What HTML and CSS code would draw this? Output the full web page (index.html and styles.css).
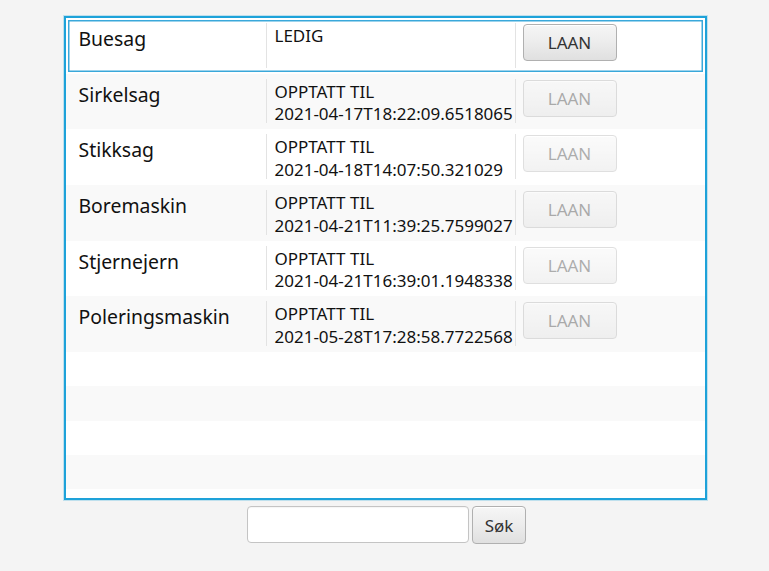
FILE: index.html
```html
<!DOCTYPE html>
<html>
<head>
<meta charset="utf-8">
<link rel="stylesheet" href="styles.css">
</head>
<body>
<div class="page">
  <div class="frame">
    <div class="row selected">
      <div class="cell name">Buesag</div>
      <div class="cell status">LEDIG</div>
      <div class="cell action"><button class="btn">LAAN</button></div>
    </div>
    <div class="row odd">
      <div class="cell name">Sirkelsag</div>
      <div class="cell status">OPPTATT TIL<br>2021-04-17T18:22:09.6518065</div>
      <div class="cell action"><button class="btn" disabled>LAAN</button></div>
    </div>
    <div class="row">
      <div class="cell name">Stikksag</div>
      <div class="cell status">OPPTATT TIL<br>2021-04-18T14:07:50.321029</div>
      <div class="cell action"><button class="btn" disabled>LAAN</button></div>
    </div>
    <div class="row odd">
      <div class="cell name">Boremaskin</div>
      <div class="cell status">OPPTATT TIL<br>2021-04-21T11:39:25.7599027</div>
      <div class="cell action"><button class="btn" disabled>LAAN</button></div>
    </div>
    <div class="row">
      <div class="cell name">Stjernejern</div>
      <div class="cell status">OPPTATT TIL<br>2021-04-21T16:39:01.1948338</div>
      <div class="cell action"><button class="btn" disabled>LAAN</button></div>
    </div>
    <div class="row odd">
      <div class="cell name">Poleringsmaskin</div>
      <div class="cell status">OPPTATT TIL<br>2021-05-28T17:28:58.7722568</div>
      <div class="cell action"><button class="btn" disabled>LAAN</button></div>
    </div>
    <div class="empty"></div>
    <div class="empty odd"></div>
    <div class="empty"></div>
    <div class="empty odd"></div>
  </div>
  <div class="search">
    <input class="field" type="text">
    <button class="btn search-btn">Søk</button>
  </div>
</div>
</body>
</html>
```
FILE: styles.css
```css
html, body {
  margin: 0;
  padding: 0;
  background: #f4f4f4;
}
body {
  font-family: "Noto Sans", "Open Sans", sans-serif;
  color: #111;
}
.page {
  width: 769px;
  height: 571px;
  padding-top: 16px;
  box-sizing: border-box;
  display: flex;
  flex-direction: column;
  align-items: center;
}
.frame {
  width: 643px;
  height: 484px;
  box-sizing: border-box;
  border: 2px solid #1ea2d9;
  box-shadow: 0 0 0 1px rgba(30, 162, 217, 0.25);
  background: #fff;
  margin-left: 1px;
  overflow: hidden;
}
.row {
  height: 55.7px;
  box-sizing: border-box;
  display: flex;
  padding: 5px 0 6px;
  background: #fff;
}
.row.odd, .empty.odd {
  background: #f9f9f9;
}
.row.selected {
  box-shadow: inset 0 0 0 2px #fff, inset 0 0 0 3.5px #3aa8da;
}
.empty {
  height: 34.3px;
  background: #fff;
}
.cell {
  box-sizing: border-box;
  border-right: 1px solid #e3e3e3;
}
.name {
  width: 201px;
  padding: 3px 0 0 13px;
  font-size: 19.4px;
  line-height: 26px;
}
.status {
  width: 249px;
  padding: 2px 0 0 8px;
  font-size: 17px;
  line-height: 22.5px;
}
.action {
  border-right: none;
  padding: 1px 0 0 7px;
}
.btn {
  font-family: "Noto Sans", "Open Sans", sans-serif;
  font-size: 17px;
  color: #333;
  height: 37px;
  width: 94px;
  padding: 0;
  border: 1px solid #b0b0b0;
  border-radius: 4px;
  background: linear-gradient(to bottom, #f6f6f6 0%, #ececec 50%, #e0e0e0 100%);
  box-shadow: inset 0 1px 0 #fff;
}
.btn:disabled {
  opacity: 0.4;
  color: #333;
}
.search {
  display: flex;
  gap: 3px;
  margin-top: 6px;
  margin-left: 4px;
}
.field {
  width: 222px;
  height: 37px;
  box-sizing: border-box;
  border: 1px solid #c4c4c4;
  border-radius: 4px;
  background: #fff;
  box-shadow: inset 0 1px 1px rgba(0,0,0,0.04);
  outline: none;
  margin: 0;
}
.search-btn {
  width: 54px;
  height: 38px;
}
```
